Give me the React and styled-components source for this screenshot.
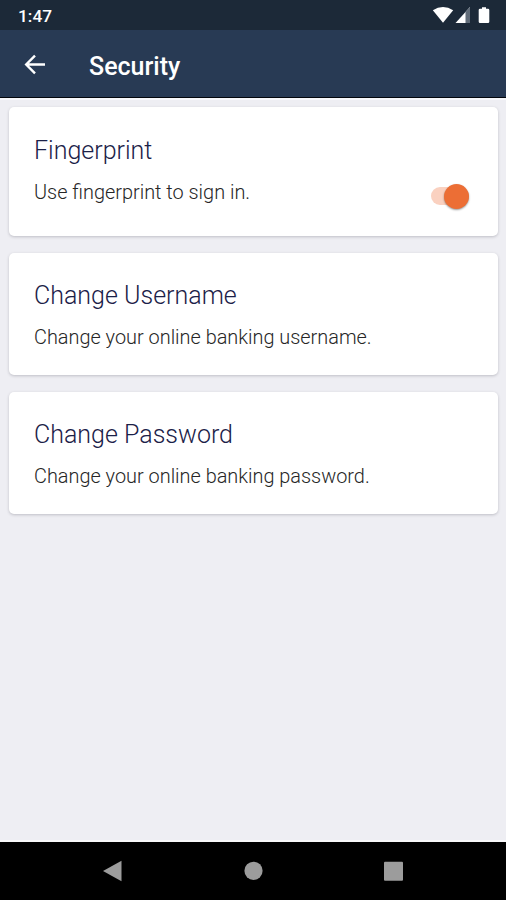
import React, { useState } from "react";
import styled, { createGlobalStyle } from "styled-components";

const GlobalStyle = createGlobalStyle`
  * {
    box-sizing: border-box;
  }

  body {
    margin: 0;
    background-color: #eeeef3;
    font-family: Roboto, sans-serif;
  }
`;

const Screen = styled.div`
  display: flex;
  flex-direction: column;
  width: 506px;
  height: 900px;
  overflow: hidden;
`;

const StatusBar = styled.div`
  display: flex;
  justify-content: space-between;
  height: 30px;
  padding-left: 18px;
  background-color: #1c2938;
`;

const Clock = styled.span`
  color: #fff;
  font-size: 17.3px;
  font-weight: 500;
  line-height: 32px;
`;

const AppBar = styled.header`
  display: flex;
  align-items: center;
  height: 68px;
  padding: 3px 0 0 24px;
  background-color: #283a54;
  border-bottom: 1px solid #04070d;
`;

const BackButton = styled.button`
  display: flex;
  width: 22px;
  padding: 0;
  border: 0;
  background: none;
`;

const PageTitle = styled.h1`
  margin: 3px 0 0 43px;
  color: #fff;
  font-size: 25px;
  font-weight: 500;
  line-height: 30px;
`;

const Content = styled.main`
  display: flex;
  flex: 1;
  flex-direction: column;
  gap: 17px;
  padding: 7px 8px 0 9px;
  border-top: 2px solid #f8f8fb;
  border-bottom: 2px solid #f8f8fa;
`;

const Card = styled.section`
  display: flex;
  justify-content: space-between;
  height: ${(props) => (props.$tall ? "129px" : "122px")};
  padding: ${(props) => (props.$tall ? "29px" : "28px")} 29px 0 25px;
  border-radius: 5px;
  background-color: #fff;
  box-shadow: 0 1px 3px rgba(40, 40, 60, 0.24);
`;

const CardTitle = styled.h2`
  margin: 0;
  color: #1b2148;
  font-size: 25px;
  font-weight: 300;
  line-height: 30px;
`;

const CardText = styled.p`
  margin: 14px 0 0;
  color: #262626;
  font-size: 19.9px;
  font-weight: 300;
  line-height: 26px;
`;

const Switch = styled.button`
  display: flex;
  align-items: center;
  justify-content: ${(props) => (props.$on ? "flex-end" : "flex-start")};
  width: 38px;
  height: 18px;
  margin-top: 51px;
  padding: 0;
  border: 0;
  border-radius: 9px;
  background-color: ${(props) => (props.$on ? "#fad1c0" : "#c8c8c8")};
`;

const Thumb = styled.span`
  width: 25px;
  height: 25px;
  flex-shrink: 0;
  border-radius: 50%;
  background-color: ${(props) => (props.$on ? "#ec6e35" : "#f5f5f5")};
  box-shadow: 0 1px 2px rgba(0, 0, 0, 0.4);
`;

const NavBar = styled.nav`
  display: flex;
  align-items: center;
  justify-content: space-between;
  height: 58px;
  padding: 0 103px;
  background-color: #000;
`;

const StatusIcons = () => (
  <svg width="86" height="30" viewBox="0 0 86 30">
    <path d="M12.8 10.2Q23 3.8 33.2 10.2L23 22.7Z" fill="#fff" />
    <path d="M50 7V23H35.5Z" fill="#fff" />
    <path d="M45.5 12L50 7V23H45.5Z" fill="#606b78" />
    <path
      d="M62 7.2H66V8.8H68Q69.3 8.8 69.3 10V21.8Q69.3 23 68 23H60Q58.7 23 58.7 21.8V10Q58.7 8.8 60 8.8H62Z"
      fill="#fff"
    />
  </svg>
);

const BackArrow = () => (
  <svg width="22" height="22" viewBox="0 0 22 22">
    <path
      d="M21 10.5H3M11 1.7L2.2 10.5L11 19.3"
      fill="none"
      stroke="#fff"
      strokeWidth="2.4"
    />
  </svg>
);

const NavIcons = () => (
  <>
    <svg width="19" height="22" viewBox="0 0 19 22">
      <path d="M18.5 0.7V21.3L0 11Z" fill="#9c9c9c" />
    </svg>
    <svg width="19" height="20" viewBox="0 0 19 20">
      <circle cx="9.5" cy="9.8" r="9.1" fill="#9c9c9c" />
    </svg>
    <svg width="19" height="20" viewBox="0 0 19 20">
      <rect y="0.7" width="19" height="19" rx="1" fill="#9c9c9c" />
    </svg>
  </>
);

export default function App() {
  const [fingerprint, setFingerprint] = useState(true);

  return (
    <>
      <GlobalStyle />
      <Screen>
        <StatusBar>
          <Clock>1:47</Clock>
          <StatusIcons />
        </StatusBar>
        <AppBar>
          <BackButton aria-label="Back">
            <BackArrow />
          </BackButton>
          <PageTitle>Security</PageTitle>
        </AppBar>
        <Content>
          <Card $tall>
            <div>
              <CardTitle>Fingerprint</CardTitle>
              <CardText>Use fingerprint to sign in.</CardText>
            </div>
            <Switch
              role="switch"
              aria-checked={fingerprint}
              aria-label="Fingerprint"
              $on={fingerprint}
              onClick={() => setFingerprint(!fingerprint)}
            >
              <Thumb $on={fingerprint} />
            </Switch>
          </Card>
          <Card>
            <div>
              <CardTitle>Change Username</CardTitle>
              <CardText>Change your online banking username.</CardText>
            </div>
          </Card>
          <Card>
            <div>
              <CardTitle>Change Password</CardTitle>
              <CardText>Change your online banking password.</CardText>
            </div>
          </Card>
        </Content>
        <NavBar>
          <NavIcons />
        </NavBar>
      </Screen>
    </>
  );
}
